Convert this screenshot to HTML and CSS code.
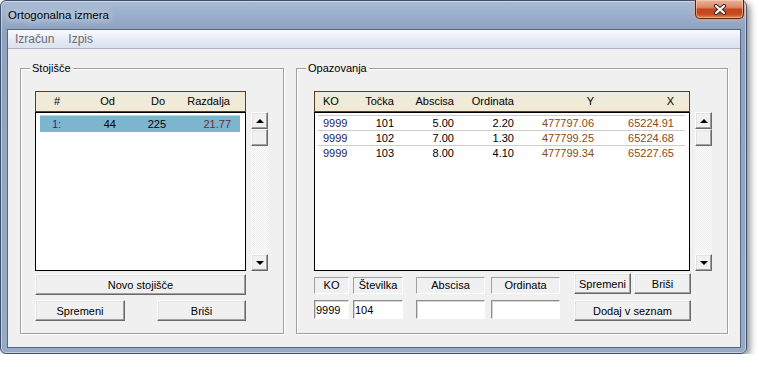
FILE: index.html
```html
<!DOCTYPE html>
<html>
<head>
    <link rel="stylesheet" href="styles.css">
</head>
<body>
    <div class="window">
        <div class="titlebar">
            <span class="title">Ortogonalna izmera</span>
            <span class="close">
                <svg width="14" height="11" viewBox="0 0 14 11">
                    <path d="M3 2 L11 9 M11 2 L3 9" stroke="#3b2b2b" stroke-width="4.2" stroke-linecap="round"/>
                    <path d="M3 2 L11 9 M11 2 L3 9" stroke="#fff" stroke-width="2.2" stroke-linecap="round"/>
                </svg>
            </span>
        </div>
        <div class="client">
            <div class="menubar">
                <span>Izračun</span>
                <span>Izpis</span>
            </div>
            <div class="groups">
                <div class="group group-st">
                    <div class="legend">Stojišče</div>
                    <div class="listrow">
                        <div class="listcol list-st">
                            <div class="lhead cols-st-head">
                                <span class="c">#</span>
                                <span class="r">Od</span>
                                <span class="r">Do</span>
                                <span class="r">Razdalja</span>
                            </div>
                            <div class="listbox">
                                <div class="row row-st selected">
                                    <span class="navy">1:</span>
                                    <span class="r">44</span>
                                    <span class="r">225</span>
                                    <span class="r maroon">21.77</span>
                                </div>
                            </div>
                        </div>
                        <div class="vscroll">
                            <div class="sbtn"><i class="tri up"></i></div>
                            <div class="sbtn thumb"></div>
                            <div class="track"></div>
                            <div class="sbtn"><i class="tri down"></i></div>
                        </div>
                    </div>
                    <button class="btn btn-novo">Novo stojišče</button>
                    <div class="btnrow">
                        <button class="btn btn-sp">Spremeni</button>
                        <button class="btn btn-br">Briši</button>
                    </div>
                </div>

                <div class="group group-op">
                    <div class="legend">Opazovanja</div>
                    <div class="listrow">
                        <div class="listcol list-op">
                            <div class="lhead cols-op-head">
                                <span class="ko">KO</span>
                                <span class="r">Točka</span>
                                <span class="r">Abscisa</span>
                                <span class="r">Ordinata</span>
                                <span class="r">Y</span>
                                <span class="r">X</span>
                            </div>
                            <div class="listbox">
                                <div class="row row-op">
                                    <span class="ko navy2">9999</span><span class="r">101</span><span class="r">5.00</span><span class="r">2.20</span><span class="r brown">477797.06</span><span class="r brown">65224.91</span>
                                </div>
                                <div class="row row-op">
                                    <span class="ko navy2">9999</span><span class="r">102</span><span class="r">7.00</span><span class="r">1.30</span><span class="r brown">477799.25</span><span class="r brown">65224.68</span>
                                </div>
                                <div class="row row-op">
                                    <span class="ko navy2">9999</span><span class="r">103</span><span class="r">8.00</span><span class="r">4.10</span><span class="r brown">477799.34</span><span class="r brown">65227.65</span>
                                </div>
                            </div>
                        </div>
                        <div class="vscroll">
                            <div class="sbtn"><i class="tri up"></i></div>
                            <div class="sbtn thumb"></div>
                            <div class="track"></div>
                            <div class="sbtn"><i class="tri down"></i></div>
                        </div>
                    </div>
                    <div class="entry">
                        <span class="tag tag-ko">KO</span>
                        <span class="tag tag-st">Številka</span>
                        <span class="tag tag-ab">Abscisa</span>
                        <span class="tag tag-or">Ordinata</span>
                        <div class="entry-btns">
                            <button class="btn btn-sm">Spremeni</button>
                            <button class="btn btn-sm">Briši</button>
                        </div>
                        <input class="field" type="text" value="9999">
                        <input class="field" type="text" value="104">
                        <input class="field" type="text" value="">
                        <input class="field" type="text" value="">
                        <button class="btn btn-dodaj">Dodaj v seznam</button>
                    </div>
                </div>
            </div>
        </div>
    </div>
</body>
</html>
```

FILE: styles.css
```css
body {
    margin: 0;
    padding: 0;
    background-color: #fff;
    font-family: "Liberation Sans", Arial, sans-serif;
    font-size: 11px;
    color: #000;
}

.window {
    width: 747px;
    height: 354px;
    box-sizing: border-box;
    border: 1px solid #3e506c;
    border-radius: 6px;
    padding: 0 5px 5px 6px;
    background: linear-gradient(180deg, #a9bbd4 0, #8ea3c2 28px, #96aac7 100%);
    box-shadow: 3px 3px 7px rgba(0, 0, 0, 0.45), inset 0 0 0 1px rgba(255, 255, 255, 0.45);
}

.titlebar {
    display: flex;
    height: 28px;
    margin: 0 -5px 0 -6px;
}

.title {
    padding-left: 7px;
    line-height: 28px;
    font-size: 11.5px;
    color: #000;
    text-shadow: 0 0 6px #dde6f2, 0 0 10px #dde6f2;
}

.close {
    display: flex;
    align-items: center;
    justify-content: center;
    width: 49px;
    height: 19px;
    box-sizing: border-box;
    margin: -1px 2px 0 auto;
    border: 1px solid #5a2210;
    border-top: none;
    border-radius: 0 0 5px 5px;
    background: linear-gradient(180deg, #eab39c 0%, #dc8a64 40%, #c4461b 52%, #c54a1e 78%, #e0874f 100%);
    box-shadow: 0 0 4px #f3a77e, inset 0 0 0 1px rgba(255, 220, 200, 0.5);
}

.client {
    height: 319px;
    box-sizing: border-box;
    border: 1px solid #56677f;
    background-color: #f0f0f0;
}

.menubar {
    display: flex;
    gap: 14px;
    height: 18px;
    padding-left: 7px;
    border-bottom: 1px solid #aab4c6;
    background: linear-gradient(180deg, #fafbfd 0%, #e6ebf5 50%, #d9e1f0 100%);
    line-height: 18px;
    font-size: 12px;
    color: #6d6d6d;
}

.groups {
    display: flex;
    gap: 12px;
    padding: 19px 12px 0 12px;
}

.group {
    height: 266px;
    box-sizing: border-box;
    border: 1px solid #a0a0a0;
    box-shadow: inset 1px 1px #fff, 1px 1px #fff;
}

.group-st {
    width: 264px;
    padding-left: 14px;
}

.group-op {
    width: 432px;
    padding-left: 17px;
}

.legend {
    width: fit-content;
    height: 14px;
    margin: -8px 0 0 -5px;
    padding: 0 2px;
    line-height: 14px;
    background-color: #f0f0f0;
}

.group-op .legend {
    margin-left: -8px;
}

.listrow {
    display: flex;
    gap: 5px;
    margin-top: 16px;
}

.list-st {
    width: 211px;
}

.list-op {
    width: 376px;
}

.lhead {
    display: grid;
    height: 21px;
    box-sizing: border-box;
    border: 1px solid #5e3e1e;
    background-color: #f0ead9;
    line-height: 19px;
}

.cols-st-head {
    grid-template-columns: 42px 37px 50px 65px 1fr;
}

.cols-op-head {
    grid-template-columns: 38px 41px 60px 60px 80px 80px 1fr;
}

.cols-op-head .ko {
    padding-left: 8px;
}

.listbox {
    height: 159px;
    box-sizing: border-box;
    border: 1px solid #000;
    background-color: #fff;
    padding-top: 2px;
}

.row {
    display: grid;
    border-top: 1px solid #cdcdcd;
}

.row-st {
    height: 16px;
    margin: 0 5px 0 4px;
    grid-template-columns: 38px 38px 50px 65px 1fr;
    line-height: 16px;
}

.row-st .navy {
    padding-left: 12px;
}

.row-op {
    height: 14px;
    margin: 0 4px 0 3px;
    grid-template-columns: 35px 41px 60px 60px 80px 80px 1fr;
    line-height: 14px;
}

.row-op .ko {
    padding-left: 5px;
}

.selected {
    background-color: #7db5cf;
}

.c {
    text-align: center;
}

.r {
    text-align: right;
}

.navy {
    color: #23307a;
}

.navy2 {
    color: #1e1e5e;
}

.maroon {
    color: #6a2a3c;
}

.brown {
    color: #8a4a14;
}

.vscroll {
    display: flex;
    flex-direction: column;
    width: 17px;
    height: 159px;
    margin-top: 21px;
}

.sbtn {
    display: flex;
    align-items: center;
    justify-content: center;
    height: 17px;
    box-sizing: border-box;
    border: 1px solid;
    border-color: #fff #696969 #696969 #fff;
    box-shadow: inset -1px -1px #a0a0a0, inset 1px 1px #e3e3e3;
    background-color: #f0f0f0;
}

.track {
    flex: 1;
    background: repeating-conic-gradient(#ebebeb 0 25%, #fff 0 50%) 0 0 / 2px 2px;
}

.tri {
    width: 0;
    height: 0;
    border-left: 4px solid transparent;
    border-right: 4px solid transparent;
}

.tri.up {
    border-bottom: 4px solid #000;
}

.tri.down {
    border-top: 4px solid #000;
}

.btn {
    height: 21px;
    box-sizing: border-box;
    padding: 0;
    border: 1px solid;
    border-color: #fff #696969 #696969 #fff;
    box-shadow: inset -1px -1px #a0a0a0, inset 1px 1px #e3e3e3;
    background-color: #f0f0f0;
    font-family: "Liberation Sans", Arial, sans-serif;
    font-size: 11px;
    color: #000;
}

.btn-novo {
    display: block;
    width: 211px;
    margin-top: 3px;
}

.btnrow {
    display: flex;
    justify-content: space-between;
    width: 211px;
    margin-top: 5px;
}

.btn-sp {
    width: 90px;
}

.btn-br {
    width: 89px;
}

.entry {
    display: grid;
    grid-template-columns: 35px 50px 69px 69px 117px;
    grid-template-rows: 21px 21px;
    column-gap: 4px;
    row-gap: 6px;
    margin-top: 2px;
}

.tag {
    align-self: end;
    height: 17px;
    box-sizing: border-box;
    border: 1px solid;
    border-color: #a0a0a0 #fff #fff #a0a0a0;
    text-align: center;
    line-height: 15px;
}

.tag-ab,
.entry .field:nth-of-type(3) {
    margin-left: 9px;
    margin-right: -9px;
}

.tag-or,
.entry .field:nth-of-type(4) {
    margin-left: 11px;
    margin-right: -11px;
}

.entry-btns {
    display: flex;
    justify-content: space-between;
    margin-left: 21px;
    margin-right: -21px;
}

.btn-sm {
    width: 57px;
}

.field {
    width: 100%;
    height: 19px;
    box-sizing: border-box;
    margin: 0;
    padding: 0 1px;
    border: 1px solid;
    border-color: #8e8e8e #fff #fff #8e8e8e;
    box-shadow: inset 1px 1px #d4d4d4;
    background-color: #fff;
    font-family: "Liberation Sans", Arial, sans-serif;
    font-size: 11px;
    color: #000;
    outline: none;
}

.btn-dodaj {
    width: 117px;
    margin-left: 21px;
    margin-right: -21px;
}
```
